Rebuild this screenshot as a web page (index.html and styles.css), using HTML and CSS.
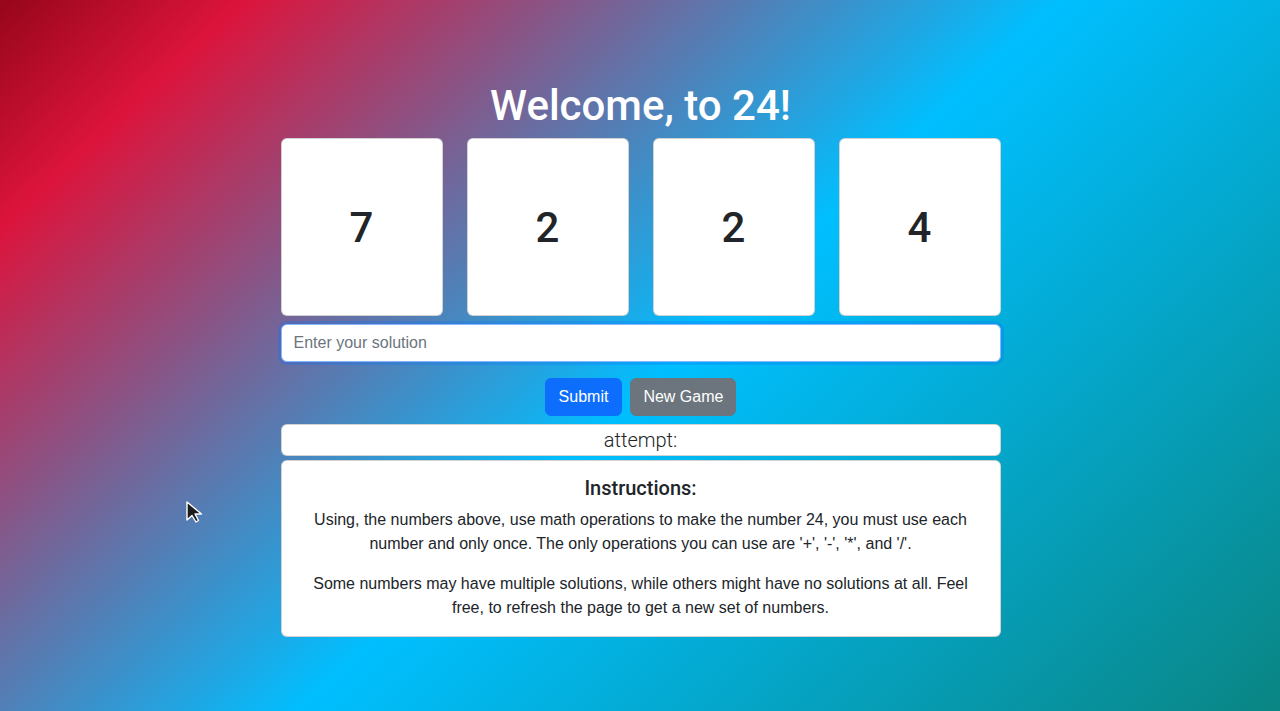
FILE: index.html
```html
<!DOCTYPE html>
<html lang="en">
<head>
<meta charset="utf-8">
<title>24</title>
<link rel="stylesheet" href="styles.css">
</head>
<body>
<main class="page">
  <div class="container">
    <h1 class="title">Welcome, to 24!</h1>
    <div class="cards">
      <div class="card"><span class="num">7</span></div>
      <div class="card"><span class="num">2</span></div>
      <div class="card"><span class="num">2</span></div>
      <div class="card"><span class="num">4</span></div>
    </div>
    <input class="solution" type="text" placeholder="Enter your solution">
    <div class="actions">
      <button class="btn btn-primary" type="button">Submit</button>
      <button class="btn btn-secondary" type="button">New Game</button>
    </div>
    <div class="attempt">attempt:</div>
    <section class="instructions">
      <h2 class="inst-title">Instructions:</h2>
      <p>Using, the numbers above, use math operations to make the number 24, you must use each number and only once. The only operations you can use are '+', '-', '*', and '/'.</p>
      <p>Some numbers may have multiple solutions, while others might have no solutions at all. Feel free, to refresh the page to get a new set of numbers.</p>
    </section>
  </div>
</main>
<svg class="cursor" width="20" height="26" viewBox="0 0 20 26" aria-hidden="true">
  <path d="M2 2 L2 20 L7 15.5 L11 22 L13.5 20.5 L10 14 L16.5 14 Z" fill="#1c1c1c" stroke="#ffffff" stroke-width="1.4" stroke-linejoin="round"/>
</svg>
</body>
</html>
```
FILE: styles.css
```css
html, body {
  margin: 0;
  height: 100%;
}
body {
  font-family: "Liberation Sans", Arial, sans-serif;
  color: #212529;
  background: linear-gradient(137deg, #96061a 0%, #dc143c 12%, #00bfff 52%, #0a8583 100%);
  overflow: hidden;
  position: relative;
}
.page {
  padding-top: 82px;
  display: flex;
  justify-content: center;
}
.container {
  width: 720px;
  margin-left: 1px;
  display: flex;
  flex-direction: column;
}
.title {
  margin: 0 0 8px;
  font-family: Roboto, "Liberation Sans", sans-serif;
  font-size: 42px;
  font-weight: 500;
  line-height: 48px;
  color: #ffffff;
  text-align: center;
}
.cards {
  display: flex;
  gap: 24px;
}
.card {
  flex: 1;
  height: 178px;
  box-sizing: border-box;
  background: #ffffff;
  border: 1px solid rgba(0, 0, 0, 0.175);
  border-radius: 6px;
  display: flex;
  align-items: center;
  justify-content: center;
  padding-top: 2px;
}
.num {
  font-family: Roboto, "Liberation Sans", sans-serif;
  font-size: 42px;
  font-weight: 500;
  line-height: 1;
  color: #212529;
}
.solution {
  margin-top: 8px;
  height: 38px;
  box-sizing: border-box;
  padding: 6px 12px;
  font-family: inherit;
  font-size: 16px;
  color: #212529;
  background: #ffffff;
  border: 1px solid #86b7fe;
  border-radius: 6px;
  box-shadow: 0 0 0 3px rgba(13, 110, 253, 0.28);
  outline: none;
}
.solution::placeholder {
  color: #6c757d;
}
.actions {
  margin-top: 16px;
  display: flex;
  justify-content: center;
  gap: 8px;
}
.btn {
  height: 38px;
  padding: 6px 12px;
  font-family: inherit;
  font-size: 16px;
  line-height: 24px;
  color: #ffffff;
  border: 1px solid transparent;
  border-radius: 6px;
}
.btn-primary {
  padding: 6px 13px;
  background: #0d6efd;
  border-color: #0d6efd;
}
.btn-secondary {
  background: #6c757d;
  border-color: #6c757d;
}
.attempt {
  margin-top: 8px;
  height: 32px;
  box-sizing: border-box;
  background: #ffffff;
  border: 1px solid rgba(0, 0, 0, 0.175);
  border-radius: 6px;
  text-align: center;
  font-family: Roboto, "Liberation Sans", sans-serif;
  font-size: 20px;
  font-weight: 300;
  line-height: 30px;
  color: #212529;
}
.instructions {
  margin-top: 4px;
  box-sizing: border-box;
  background: #ffffff;
  border: 1px solid rgba(0, 0, 0, 0.175);
  border-radius: 6px;
  padding: 15px 16px 16px;
  text-align: center;
}
.inst-title {
  margin: 0 0 8px;
  font-family: Roboto, "Liberation Sans", sans-serif;
  font-size: 20px;
  font-weight: 500;
  line-height: 24px;
}
.instructions p {
  margin: 0 0 16px;
  font-size: 16px;
  line-height: 24px;
}
.instructions p:last-child {
  margin-bottom: 0;
}
.cursor {
  position: absolute;
  left: 185px;
  top: 500px;
}
```
